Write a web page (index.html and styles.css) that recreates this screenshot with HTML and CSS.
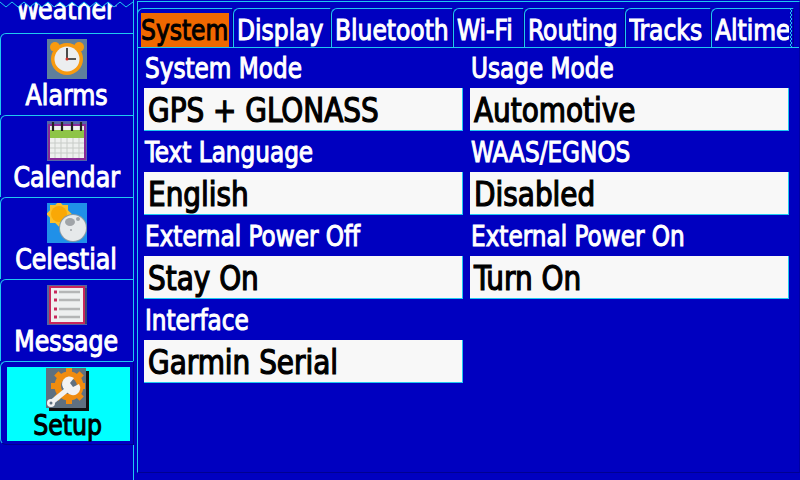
FILE: index.html
```html
<!DOCTYPE html>
<html lang="en">
<head>
    <meta charset="UTF-8">
    <title>Setup</title>
    <link rel="stylesheet" href="styles.css">
</head>
<body>
    <div class="screen">
        <div class="sidebar">
            <div class="menu-clip">
                <span class="menu-label">Weather</span>
                <svg class="zigzag-top" viewBox="0 0 134 8" width="134" height="8">
                    <polygon points="0,0 0,2 6,7 12,2 18,7 24,2 30,7 36,2 42,7 48,2 54,7 60,2 66,7 72,2 78,7 84,2 90,7 96,2 102,7 108,2 114,7 120,2 126,7 133,2 133,0" fill="#0000c0"/>
                    <polyline points="0,2 6,7 12,2 18,7 24,2 30,7 36,2 42,7 48,2 54,7 60,2 66,7 72,2 78,7 84,2 90,7 96,2 102,7 108,2 114,7 120,2 126,7 133,2" fill="none" stroke="#20c8f0" stroke-width="1"/>
                </svg>
            </div>

            <div class="menu-item">
                <svg class="icon" viewBox="0 0 40 40" width="40" height="40">
                    <rect width="40" height="40" fill="#5f7f9c"/>
                    <circle cx="8" cy="8" r="5" fill="#f79a10"/>
                    <circle cx="32" cy="8" r="5" fill="#f79a10"/>
                    <circle cx="20" cy="20" r="16" fill="#f79a10"/>
                    <circle cx="20" cy="20" r="12.500" fill="#eceef0"/>
                    <path d="M20 9V20H29" fill="none" stroke="#222" stroke-width="1.600"/>
                    <circle cx="20" cy="20" r="1.500" fill="#d8352a"/>
                </svg>
                <span class="menu-label">Alarms</span>
            </div>

            <div class="menu-item">
                <svg class="icon" viewBox="0 0 40 40" width="40" height="40">
                    <rect width="40" height="40" fill="#5565a8"/>
                    <rect x="1" y="3" width="38" height="36" fill="#8a2a98"/>
                    <rect x="3" y="5" width="34" height="32" fill="#eef0ee"/>
                    <rect x="3" y="9" width="34" height="8" fill="#8ec448"/>
                    <path d="M8 17V37M14 17V37M20 17V37M26 17V37M32 17V37M3 22H37M3 27H37M3 32H37" stroke="#c8ccc8" stroke-width="1" fill="none"/>
                    <path d="M6 1V10M15 1V10M25 1V10M34 1V10" stroke="#222" stroke-width="2.200" fill="none"/>
                </svg>
                <span class="menu-label">Calendar</span>
            </div>

            <div class="menu-item">
                <svg class="icon" viewBox="0 0 40 40" width="40" height="40">
                    <rect width="40" height="40" fill="#2090e8"/>
                    <rect x="3" y="2" width="18" height="18" fill="#fbc02d"/>
                    <rect x="3" y="2" width="18" height="18" fill="#fbc02d" transform="rotate(45 12 11)"/>
                    <circle cx="12" cy="11" r="8" fill="#f9a806"/>
                    <circle cx="26" cy="25" r="14" fill="#8a9aa4"/>
                    <circle cx="26" cy="25" r="13" fill="#e6e9ea"/>
                    <ellipse cx="23" cy="19" rx="5" ry="4" fill="#a0a4a8"/>
                    <circle cx="31" cy="16" r="2" fill="#a0a4a8"/>
                    <circle cx="24" cy="27" r="1" fill="#a0a4a8"/>
                </svg>
                <span class="menu-label">Celestial</span>
            </div>

            <div class="menu-item">
                <svg class="icon" viewBox="0 0 40 40" width="40" height="40">
                    <rect width="40" height="40" fill="#5565a0"/>
                    <rect x="37" y="3" width="3" height="36" fill="#3c4470"/>
                    <rect x="3" y="2" width="34" height="36" fill="#eef0f0" stroke="#c8285c" stroke-width="2"/>
                    <path d="M12 7H33M12 15H33M12 24H33M12 32H33" stroke="#b4b6b6" stroke-width="2.600" fill="none"/>
                    <path d="M7 7H10M7 15H10M7 24H10M7 32H10" stroke="#c8285c" stroke-width="3" fill="none"/>
                </svg>
                <span class="menu-label">Message</span>
            </div>

            <div class="menu-item selected">
                <div class="setup-box">
                    <svg class="icon setup-icon" viewBox="0 0 43 43" width="43" height="43">
                        <rect x="3" y="3" width="40" height="40" fill="#111"/>
                        <rect width="40" height="40" fill="#5f7080"/>
                        <path d="M23 0V36M5 18H39M10.300 5.300L35.700 30.700M35.700 5.300L10.300 30.700" stroke="#f08c10" stroke-width="6" fill="none"/>
                        <circle cx="23" cy="18" r="14.500" fill="#f08c10"/>
                        <circle cx="23" cy="18" r="8" fill="#5f7080"/>
                        <path d="M6 34L22 21" stroke="#f2f2f2" stroke-width="5" fill="none"/>
                        <path d="M19 22A7 7 0 0 1 28 10L24 15L27 19L33 16A7 7 0 0 1 21 24Z" fill="#f2f2f2"/>
                        <circle cx="5" cy="35" r="4" fill="#f2f2f2"/>
                        <circle cx="5" cy="35" r="1.500" fill="#5f7080"/>
                    </svg>
                    <span class="menu-label">Setup</span>
                </div>
            </div>

            <div class="sidebar-rest"></div>
        </div>

        <div class="panel">
            <div class="tabs">
                <div class="tab tab-system active"><div class="tab-face"><span class="tab-text">System</span></div></div>
                <div class="tab tab-display"><div class="tab-face"><span class="tab-text">Display</span></div></div>
                <div class="tab tab-bluetooth"><div class="tab-face"><span class="tab-text">Bluetooth</span></div></div>
                <div class="tab tab-wifi"><div class="tab-face"><span class="tab-text">Wi-Fi</span></div></div>
                <div class="tab tab-routing"><div class="tab-face"><span class="tab-text">Routing</span></div></div>
                <div class="tab tab-tracks"><div class="tab-face"><span class="tab-text">Tracks</span></div></div>
                <div class="tab tab-altimeter">
                    <div class="tab-face"><span class="tab-text">Altime</span></div>
                    <svg class="zigzag-right" viewBox="0 0 4 38" width="4" height="38">
                        <polyline points="1,0 3,2 1,4 3,6 1,8 3,10 1,12 3,14 1,16 3,18 1,20 3,22 1,24 3,26 1,28 3,30 1,32 3,34 1,36 3,38" fill="none" stroke="#20c8f0" stroke-width="1"/>
                    </svg>
                </div>
            </div>

            <div class="settings">
                <div class="setting">
                    <div class="setting-label"><span>System Mode</span></div>
                    <div class="setting-value"><span>GPS + GLONASS</span></div>
                </div>
                <div class="setting">
                    <div class="setting-label"><span>Usage Mode</span></div>
                    <div class="setting-value"><span>Automotive</span></div>
                </div>
                <div class="setting">
                    <div class="setting-label"><span>Text Language</span></div>
                    <div class="setting-value"><span>English</span></div>
                </div>
                <div class="setting">
                    <div class="setting-label"><span>WAAS/EGNOS</span></div>
                    <div class="setting-value"><span>Disabled</span></div>
                </div>
                <div class="setting">
                    <div class="setting-label"><span>External Power Off</span></div>
                    <div class="setting-value"><span>Stay On</span></div>
                </div>
                <div class="setting">
                    <div class="setting-label"><span>External Power On</span></div>
                    <div class="setting-value"><span>Turn On</span></div>
                </div>
                <div class="setting">
                    <div class="setting-label"><span>Interface</span></div>
                    <div class="setting-value"><span>Garmin Serial</span></div>
                </div>
            </div>
        </div>
    </div>
</body>
</html>
```

FILE: styles.css
```css
* {
    margin: 0;
    padding: 0;
    box-sizing: border-box;
}

html, body {
    width: 800px;
    height: 480px;
    overflow: hidden;
}

body {
    background: #0000c0;
    font-family: "DejaVu Sans Condensed", "DejaVu Sans", sans-serif;
    font-weight: 400;
    -webkit-text-stroke: 1px currentColor;
    color: white;
}

.screen {
    display: flex;
    width: 800px;
    height: 480px;
}

.sidebar {
    width: 137px;
    flex-shrink: 0;
}

.menu-clip {
    position: relative;
    height: 33px;
    border-right: 1px solid #20c8f0;
    width: 134px;
    overflow: hidden;
    text-align: center;
}

.menu-clip .menu-label {
    position: absolute;
    left: 0;
    right: 0;
    top: -7px;
}

.zigzag-top {
    position: absolute;
    left: 0;
    top: 0;
}

.menu-item {
    width: 134px;
    height: 82px;
    border-top: 1px solid #20c8f0;
    border-left: 1px solid #20c8f0;
    border-right: 1px solid #20c8f0;
    border-top-left-radius: 6px;
    display: flex;
    flex-direction: column;
    align-items: center;
    padding-top: 5px;
}

.menu-item .icon {
    display: block;
    flex-shrink: 0;
}

.menu-label {
    display: block;
    font-size: 28px;
    line-height: 33px;
    white-space: nowrap;
    margin-left: -1px;
    transform: scaleX(0.94);
}

.selected {
    padding: 5px 3px 0 6px;
    height: 84px;
    border-bottom: 1px solid #000090;
    border-right: 1px solid #000090;
    border-bottom-left-radius: 6px;
}

.setup-box {
    width: 123px;
    height: 74px;
    background: #00ffff;
    color: black;
    display: flex;
    flex-direction: column;
    align-items: center;
}

.setup-box .menu-label {
    margin-top: -2px;
}

.setup-icon {
    margin: 1px 0 0 -2px;
}

.sidebar-rest {
    width: 134px;
    height: 35px;
    border-right: 1px solid #20c8f0;
}

.panel {
    width: 663px;
    height: 472px;
    margin-top: 1px;
    border: 1px solid #20c8f0;
    border-right-color: #0000a0;
    border-bottom-color: #000090;
    padding-top: 6px;
}

.tabs {
    display: flex;
    height: 40px;
    margin-left: -1px;
    border-bottom: 1px solid #20c8f0;
}

.tab {
    position: relative;
    height: 39px;
    border-top: 1px solid #20c8f0;
    border-left: 1px solid #20c8f0;
    border-right: 1px solid #000090;
    border-top-left-radius: 6px;
    padding: 4px 3px 0;
    flex-shrink: 0;
}

.tab-face {
    height: 34px;
    overflow: hidden;
}

.tab-text {
    display: inline-block;
    font-size: 28px;
    line-height: 36px;
    white-space: nowrap;
    transform: scaleX(0.93);
    transform-origin: left;
}

.tab.active .tab-face {
    background: #f06800;
    color: black;
}

.tab-system { width: 96px; }
.tab-display { width: 98px; }
.tab-bluetooth { width: 122px; }
.tab-wifi { width: 71px; }
.tab-routing { width: 101px; }
.tab-tracks { width: 86px; }
.tab-altimeter { width: 83px; }

.zigzag-right {
    position: absolute;
    right: 0;
    top: 0;
    background: #0000c0;
}

.settings {
    display: grid;
    grid-template-columns: 319px 319px;
    column-gap: 7px;
    padding-left: 6px;
}

.setting {
    height: 84px;
}

.setting-label {
    height: 40px;
    font-size: 28px;
    line-height: 41px;
    padding-left: 1px;
    white-space: nowrap;
}

.setting-label span,
.setting-value span {
    display: inline-block;
    transform-origin: left;
}

.setting-label span {
    transform: scaleX(0.92);
}

.setting-value {
    height: 43px;
    background: #f8f8f8;
    border-bottom: 1px solid #20c8f0;
    border-right: 1px solid #20c8f0;
    color: black;
    font-size: 33px;
    line-height: 46px;
    padding-left: 4px;
    white-space: nowrap;
    -webkit-text-stroke: 1.2px currentColor;
}

.setting-value span {
    transform: scaleX(0.94);
}
```
